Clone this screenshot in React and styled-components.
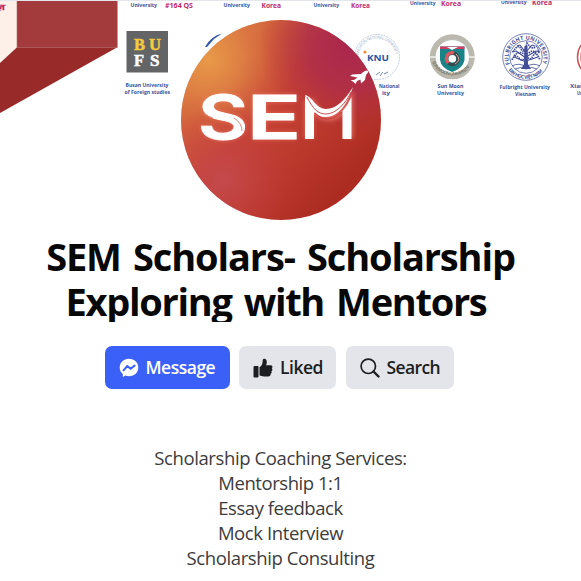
import React from "react";
import styled, { createGlobalStyle } from "styled-components";

const GlobalStyle = createGlobalStyle`
  * { box-sizing: border-box; }
  body { margin: 0; background: #fff; overflow: hidden; }
`;

const Page = styled.main`
  display: flex;
  flex-direction: column;
  align-items: center;
  width: 581px;
  height: 581px;
  overflow: hidden;
  background: #fff;
  font-family: "Open Sans", "Noto Sans", sans-serif;
`;

const Header = styled.header`
  position: relative;
  width: 100%;
  height: 232px;
  flex: none;
`;

const CoverArt = styled.svg`
  display: block;
`;

const Avatar = styled.svg`
  position: absolute;
  left: 181px;
  top: 20px;
`;

const Title = styled.h1`
  margin: 0;
  width: 561px;
  height: 90px;
  padding: 2px 20px 0 0;
  flex: none;
  overflow: hidden;
  color: #080809;
  font-size: 38px;
  line-height: 45px;
  font-weight: 700;
  text-align: center;
  white-space: nowrap;
`;

const TitleLine = styled.span`
  display: block;
  letter-spacing: ${(p) => p.$spacing}px;
  word-spacing: 3.5px;
  margin-left: ${(p) => p.$shift || 0}px;
`;

const Actions = styled.div`
  display: flex;
  gap: 9.5px;
  width: 349px;
  margin: 24px 0 0 -23px;
  flex: none;
`;

const Button = styled.button`
  display: flex;
  align-items: center;
  gap: ${(p) => p.$gap || 7}px;
  width: ${(p) => p.$width}px;
  height: 43px;
  padding: 0 0 0 14px;
  border: 0;
  border-radius: 7px;
  background: ${(p) => (p.$primary ? "#3b60f8" : "#e3e5ea")};
  color: ${(p) => (p.$primary ? "#fff" : "#1c1e21")};
  font: 600 17.5px/43px "Open Sans", "Noto Sans", sans-serif;
  letter-spacing: ${(p) => p.$spacing}px;
  white-space: nowrap;
  svg { flex: none; }
`;

const Services = styled.ul`
  margin: 56px 0 0 -20px;
  padding: 0;
  list-style: none;
  text-align: center;
  color: #3c3c3c;
  font-size: 18.5px;
  line-height: 25px;
`;

const Service = styled.li`
  letter-spacing: ${(p) => p.$spacing}px;
  white-space: nowrap;
`;

const CoverText = styled.text`
  font-family: "Open Sans", sans-serif;
  font-weight: 700;
  font-size: ${(p) => p.$size || 5.4}px;
  fill: ${(p) => p.$color || "#3655a0"};
`;

function Label({ x, y, w, children, ...rest }) {
  return (
    <CoverText x={x} y={y} textLength={w} lengthAdjust="spacingAndGlyphs" {...rest}>
      {children}
    </CoverText>
  );
}

function Cover() {
  return (
    <CoverArt width="581" height="125" viewBox="0 0 581 125">
      <defs>
        <path id="fulbrightRing" d="M 510.400 65 A 17.500 17.500 0 1 1 541.600 65" />
        <path id="fulbrightBase" d="M 508.500 70 A 21.800 21.800 0 0 0 543.500 70" />
        <path id="knuRing" d="M 358.5 57 A 18.5 18.5 0 0 1 395.5 57" />
        <path id="sunBase" d="M 432 62 A 22.3 22.3 0 0 0 473 62" />
      </defs>
      <path d="M0 1H17V47L0 63Z" fill="#fcf0e8" />
      <path d="M17 1H117.300V47.500H17Z" fill="#a33a3b" />
      <path d="M17 47.300H117.300L0 113V63Z" fill="#982a29" />
      <path d="M17 1V47.500H117.300V1" fill="none" stroke="#b66161" strokeWidth=".6" />
      <Label x="-4" y="9.500" w="9" $size={8} $color="#c52a5b">ज्ञ</Label>

      <Label x="130.500" y="6.500" w="26.500">University</Label>
      <Label x="165" y="8" w="28" $size={6.5} $color="#c22a6a">#164 QS</Label>
      <Label x="223.500" y="6.500" w="26.500">University</Label>
      <Label x="261.500" y="7.500" w="19.500" $size={6.5} $color="#c22a6a">Korea</Label>
      <Label x="313.500" y="6.500" w="25.500">University</Label>
      <Label x="351" y="7.500" w="19" $size={6.5} $color="#c22a6a">Korea</Label>
      <Label x="410" y="5" w="25.500">University</Label>
      <Label x="441" y="5.500" w="20" $size={6.5} $color="#c22a6a">Korea</Label>
      <Label x="501" y="4" w="25.500">University</Label>
      <Label x="532" y="4.500" w="20" $size={6.5} $color="#c22a6a">Korea</Label>

      <rect x="126.500" y="31" width="41.500" height="41.500" fill="#626466" />
      <g fontFamily="Liberation Serif, serif" fontSize="16" fontWeight="700" strokeWidth=".5">
        <text x="134" y="50" textLength="11" lengthAdjust="spacingAndGlyphs" fill="#f5c93e" stroke="#f5c93e">B</text>
        <text x="149" y="50" textLength="12" lengthAdjust="spacingAndGlyphs" fill="#f5c93e" stroke="#f5c93e">U</text>
        <text x="134" y="65.500" textLength="10" lengthAdjust="spacingAndGlyphs" fill="#fff" stroke="#fff">F</text>
        <text x="150" y="65.500" textLength="9.500" lengthAdjust="spacingAndGlyphs" fill="#fff" stroke="#fff">S</text>
      </g>
      <Label x="125.500" y="87" w="43">Busan University</Label>
      <Label x="124.500" y="94" w="45.500">of Foreign studies</Label>

      <path d="M205 47Q211 36 222 33.500L214 39L207 47Z" fill="#3157a5" />

      <circle cx="377" cy="57" r="22.500" fill="#fff" stroke="#a9bcd9" strokeWidth=".7" strokeDasharray="2 .8" />
      <text fontFamily="Open Sans" fontSize="4" fill="#9fb0cd">
        <textPath href="#knuRing" textLength="55">KANGWON NATIONAL UNIVERSITY</textPath>
      </text>
      <circle cx="365" cy="52" r="1.600" fill="#f08a35" />
      <Label x="367" y="60.500" w="22" $size={8.6} $color="#2856a0">KNU</Label>
      <path d="M376 75L380 72M380 76L383 72M384 74L388 72" stroke="#7389b1" strokeWidth="1" />
      <Label x="379" y="88" w="20.500">National</Label>
      <Label x="382" y="95" w="8">ity</Label>

      <circle cx="452.300" cy="56.800" r="20" fill="#fff" stroke="#bbb9ae" strokeWidth="5" />
      <circle cx="452.300" cy="56.800" r="17.200" fill="none" stroke="#8b8b84" strokeWidth=".6" />
      <path d="M430 57H436M469 57H475" stroke="#eee" strokeWidth="1.500" />
      <text fontFamily="Open Sans" fontWeight="700" fontSize="4.500" fill="#777970">
        <textPath href="#sunBase" textLength="46">SUN MOON UNIVERSITY</textPath>
      </text>
      <path d="M440 46.500H464.500V60Q463 68 452.300 72Q441 68 440 60Z" fill="#198487" />
      <path d="M440 46.500H464.500V49H440Z" fill="#d33f63" />
      <path d="M447 47L452 50L458 47" fill="#fff" />
      <circle cx="452.300" cy="58.800" r="5.800" fill="none" stroke="#3c4a4e" strokeWidth="3.400" />
      <path d="M454 53A5.800 5.800 0 0 0 448.500 63" fill="none" stroke="#dc5a60" strokeWidth="3.400" />
      <path d="M456 54Q462 60 455 64" fill="none" stroke="#e0a09d" strokeWidth="1" />
      <circle cx="452.300" cy="58.800" r="3.800" fill="#fff" />
      <Label x="437.500" y="88" w="26">Sun Moon</Label>
      <Label x="437" y="95" w="27">University</Label>

      <g fill="none" stroke="#424f98">
        <circle cx="526" cy="57" r="23.300" strokeWidth=".7" />
        <circle cx="526" cy="57" r="16.300" strokeWidth=".7" />
        <path d="M526 69V46M526 58L516 51M526 57L536 51M526 62L514 57M526 61L538 57M526 53L520 45M526 52L532 45M516 51L512 52M536 51L540 52M520 45L517 46M532 45L535 46" strokeWidth="1.100" />
        <path d="M512 60Q515 53 519 58T526 55Q530 62 533 56T540 60M513 52Q518 43 521 49T527 43Q532 50 535 47T539 54M514 56Q518 51 522 53T530 52T538 56" strokeWidth="1.700" strokeDasharray="1.500 .8" />
        <path d="M512 66Q519 62 526 67Q533 62 540 66M515 69Q521 66 526 69Q532 66 537 69" strokeWidth=".8" />
      </g>
      <path d="M524.500 46H527.500L528 64L531 69H521L524 64Z" fill="#424f98" />
      <text fontFamily="Open Sans" fontWeight="700" fontSize="5.500" fill="#424f98">
        <textPath href="#fulbrightRing" startOffset="1" textLength="68">FULBRIGHT UNIVERSITY</textPath>
      </text>
      <text fontFamily="Open Sans" fontWeight="700" fontSize="4.800" fill="#424f98">
        <textPath href="#fulbrightBase" textLength="39">ĐẠI HỌC VIỆT NAM</textPath>
      </text>
      <Label x="499.500" y="89" w="50.500">Fulbright University</Label>
      <Label x="515" y="96" w="21">Vietnam</Label>

      <circle cx="599" cy="57" r="21.500" fill="#fff" stroke="#c85759" strokeWidth="1.500" />
      <circle cx="599" cy="57" r="18.500" fill="none" stroke="#d98a8b" strokeWidth="1" />
      <Label x="570" y="88" w="24">Xiamen</Label>
      <Label x="577" y="95" w="20">University</Label>
      <path d="M0 .5H581" stroke="#e5e6eb" />
    </CoverArt>
  );
}

function SemLogo() {
  return (
    <Avatar width="200" height="200" viewBox="0 0 200 200" role="img" aria-label="SEM">
      <defs>
        <clipPath id="disc"><circle cx="100" cy="100" r="100" /></clipPath>
        <linearGradient id="base" x1="0" y1=".1" x2=".8" y2=".85">
          <stop offset="0" stopColor="#e6944a" />
          <stop offset=".5" stopColor="#c74336" />
          <stop offset="1" stopColor="#ad2c22" />
        </linearGradient>
        <radialGradient id="gold" cx="28" cy="40" r="95" gradientUnits="userSpaceOnUse">
          <stop offset="0" stopColor="#e89a48" />
          <stop offset=".35" stopColor="#e08545" stopOpacity=".75" />
          <stop offset="1" stopColor="#c54234" stopOpacity="0" />
        </radialGradient>
        <radialGradient id="plum" cx="170" cy="25" r="92" gradientUnits="userSpaceOnUse">
          <stop offset="0" stopColor="#aa264f" />
          <stop offset=".5" stopColor="#ad2c4b" stopOpacity=".75" />
          <stop offset="1" stopColor="#b43135" stopOpacity="0" />
        </radialGradient>
        <radialGradient id="rose" cx="42" cy="160" r="75" gradientUnits="userSpaceOnUse">
          <stop offset="0" stopColor="#c44b50" stopOpacity=".9" />
          <stop offset="1" stopColor="#c23c38" stopOpacity="0" />
        </radialGradient>
        <filter id="glow" x="-20%" y="-40%" width="140%" height="180%">
          <feGaussianBlur stdDeviation="2" />
        </filter>
      </defs>
      <g clipPath="url(#disc)">
        <rect width="200" height="200" fill="url(#base)" />
        <rect width="200" height="200" fill="url(#gold)" />
        <rect width="200" height="200" fill="url(#plum)" />
        <rect width="200" height="200" fill="url(#rose)" />
      </g>
      <g fontFamily="Inter, sans-serif" fontWeight="600" fontSize="60">
        <g fill="#ff8b7b" stroke="#ff8b7b" opacity=".55" filter="url(#glow)">
          <text x="17" y="118.500" textLength="50" lengthAdjust="spacingAndGlyphs">S</text>
          <text x="66" y="118.500" textLength="54" lengthAdjust="spacingAndGlyphs">E</text>
          <path d="M128 118V80Q145 112 168 83V118" fill="none" strokeWidth="9" />
        </g>
        <g fill="#fff" stroke="#fff" strokeWidth="1">
          <text x="17" y="118.500" textLength="50" lengthAdjust="spacingAndGlyphs">S</text>
          <text x="66" y="118.500" textLength="54" lengthAdjust="spacingAndGlyphs">E</text>
        </g>
      </g>
      <path d="M124 119V76L133 88V119ZM161.500 119V91Q167 85 170.500 77V119Z" fill="#fff" />
      <path d="M124 75C128 82 131 97 144 97C158 97 166 84 172 67C164 80 155 89 145 89C135 89 131 76 124 75Z" fill="#fff" />
      <path d="M126 77C132 89 137 94 145 94C155 94 165 83 170 72M134 93Q146 106 161 92" fill="none" stroke="#c23b3b" strokeWidth=".9" />
      <path d="M21 88Q22 95 32 98M53 98Q61 103 61 111" fill="none" stroke="#cf6b5c" strokeWidth=".8" />
      <path d="M186.500 50.500Q183 50.500 180 54L171 54.500L169 56L176.500 57.500L173 60L169.500 60L172.500 62L174.500 64L176 61L179.500 59.500L180 63.500L184 60L185 55Q188 52 186.500 50.500Z" fill="#fff" />
    </Avatar>
  );
}

function MessengerIcon() {
  return (
    <svg width="20" height="20" viewBox="0 0 20 20">
      <path d="M10 .8C4.600.8.700 4.600.7 9.600c0 2.700 1.200 4.900 3.100 6.500v3l2.800-1.500c1.100.4 2.200.6 3.400.6 5.400 0 9.300-3.700 9.300-8.600S15.400.8 10 .8Z" fill="#fff" />
      <path d="M4.500 12.300 8.300 8l3.300 2.700 4-3.100" fill="none" stroke="#3b60f8" strokeWidth="2" strokeLinecap="round" strokeLinejoin="round" />
    </svg>
  );
}

function LikeIcon() {
  return (
    <svg width="20" height="20" viewBox="0 0 20 20" fill="#1c1e21">
      <rect x=".5" y="8" width="5" height="11.500" rx="1" />
      <path d="M6.500 9.200C9 7.800 9.700 5.500 9.700 2.300 9.700 1.200 10.400.7 11.300.7c1.800 0 2.500 1.500 2.500 3.200 0 1.100-.3 2.300-.7 3.400h4.600c1.400 0 2 1 1.700 2-.1.400-.3.700-.6.900.6.500.8 1.300.5 2-.2.500-.5.800-.9 1 .3.500.4 1.100.1 1.700-.2.500-.5.700-.9.900.2 1.700-.7 2.700-2.500 2.700h-4c-2 0-3.400-.5-4.600-1.200Z" />
    </svg>
  );
}

function SearchIcon() {
  return (
    <svg width="20" height="20" viewBox="0 0 20 20" fill="none" stroke="#1c1e21">
      <circle cx="8.300" cy="8.300" r="7.200" strokeWidth="1.700" />
      <path d="m13.500 13.500 5 5" strokeWidth="2.400" strokeLinecap="round" />
    </svg>
  );
}

const services = [
  { text: "Scholarship Coaching Services:", spacing: -0.38 },
  { text: "Mentorship 1:1", spacing: -0.45 },
  { text: "Essay feedback", spacing: -0.45 },
  { text: "Mock Interview", spacing: -0.4 },
  { text: "Scholarship Consulting", spacing: -0.4 },
];

export default function App() {
  return (
    <Page>
      <GlobalStyle />
      <Header>
        <Cover />
        <SemLogo />
      </Header>
      <Title>
        <TitleLine $spacing={-1.13}>SEM Scholars- Scholarship</TitleLine>
        <TitleLine $spacing={-1.3} $shift={-9}>Exploring with Mentors</TitleLine>
      </Title>
      <Actions>
        <Button $primary $width={125} $spacing={-0.5}><MessengerIcon />Message</Button>
        <Button $width={97} $spacing={-0.5}><LikeIcon />Liked</Button>
        <Button $width={108} $spacing={-0.6}><SearchIcon />Search</Button>
      </Actions>
      <Services>
        {services.map((s) => (
          <Service key={s.text} $spacing={s.spacing}>{s.text}</Service>
        ))}
      </Services>
    </Page>
  );
}
